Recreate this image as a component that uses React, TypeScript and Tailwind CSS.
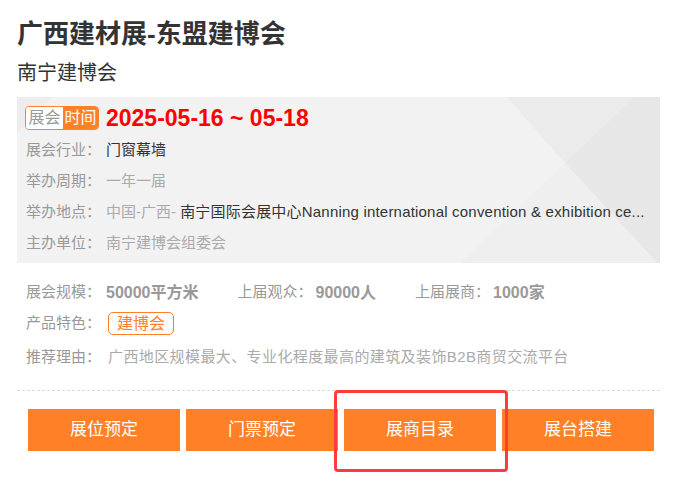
import React from "react";

const font = { fontFamily: '"Liberation Sans", Arial, "Noto Sans CJK SC", sans-serif' };

function Row({ label, children }: { label: string; children: React.ReactNode }) {
  return (
    <div className="flex h-[31px] items-center text-[15px]">
      <span className="w-[80px] shrink-0 text-[#999]">{label}</span>
      <div className="min-w-0 flex-1 whitespace-nowrap">{children}</div>
    </div>
  );
}

export default function App() {
  return (
    <div className="w-[676px] h-[482px] bg-white overflow-hidden" style={font}>
      <div className="pl-[17px] pr-[16px] pt-[16px]">
        <h1 className="text-[26px] leading-[36px] font-bold text-[#333]">广西建材展-东盟建博会</h1>
        <div className="mt-[7px] text-[20px] leading-[28px] text-[#333]">南宁建博会</div>

        <div className="relative mt-[10px] bg-[#f2f2f2] pl-[8px] pr-[10px] pt-[8px] pb-[4px] overflow-hidden">
          <svg className="absolute inset-0 h-full w-full" viewBox="0 0 643 166" preserveAspectRatio="none">
            <polygon points="0,0 36,0 0,36" fill="#ebebeb" opacity="0.7" />
            <polygon points="490,0 617,0 548,66" fill="#ebebeb" />
            <polygon points="548,66 617,0 643,0 643,166 640,166" fill="#e7e7e7" />
            <polygon points="443,166 548,66 640,166" fill="#efefef" />
          </svg>
          <div className="relative">
            <div className="flex h-[26px] items-center">
              <div className="flex h-[24px] w-[74px] overflow-hidden rounded-[4px] border border-[#ff8026] text-[16px] leading-[22px]">
                <span className="flex w-[37px] items-center justify-center bg-white text-[#999]">展会</span>
                <span className="flex flex-1 items-center justify-center bg-[#ff8026] text-white">时间</span>
              </div>
              <span className="ml-[7px] text-[23px] font-bold leading-[26px] text-[#ff0000]">2025-05-16 ~ 05-18</span>
            </div>
            <div className="mt-[4px] pl-[1px]">
              <Row label="展会行业：">
                <span className="text-[#333]">门窗幕墙</span>
              </Row>
              <Row label="举办周期：">
                <span className="text-[#aaa]">一年一届</span>
              </Row>
              <Row label="举办地点：">
                <span className="text-[#aaa]">中国-广西- </span>
                <span className="text-[#333] tracking-[0.2px]">南宁国际会展中心Nanning international convention &amp; exhibition ce...</span>
              </Row>
              <Row label="主办单位：">
                <span className="text-[#aaa]">南宁建博会组委会</span>
              </Row>
            </div>
          </div>
        </div>

        <div className="pl-[9px] mt-[14px]">
          <div className="flex h-[31px] items-center text-[15px]">
            <span className="w-[80px] shrink-0 text-[#999]">展会规模：</span>
            <span className="mr-[39px] text-[16px] font-bold text-[#999]">50000平方米</span>
            <span className="mr-[3px] text-[#999]">上届观众：</span>
            <span className="mr-[39px] text-[16px] font-bold text-[#999]">90000人</span>
            <span className="mr-[3px] text-[#999]">上届展商：</span>
            <span className="text-[16px] font-bold text-[#999]">1000家</span>
          </div>
          <div className="flex h-[31px] items-center text-[15px]">
            <span className="w-[80px] shrink-0 text-[#999]">产品特色：</span>
            <span className="ml-[2px] flex h-[23px] w-[66px] items-center justify-center rounded-[5px] border border-[#ff8026] text-[16px] text-[#ff8026]">建博会</span>
          </div>
          <div className="mt-[3px] flex h-[31px] items-center text-[15px]">
            <span className="w-[80px] shrink-0 text-[#999]">推荐理由：</span>
            <span className="ml-[2px] tracking-[0.4px] text-[#aaa]">广西地区规模最大、专业化程度最高的建筑及装饰B2B商贸交流平台</span>
          </div>
        </div>

        <div className="mt-[17px] border-t border-dashed border-[#dcdcdc]" />

        <div className="relative mt-[18px] flex gap-[6px] pl-[11px]">
          {["展位预定", "门票预定", "展商目录", "展台搭建"].map((t) => (
            <div key={t} className="flex h-[42px] w-[152px] items-center justify-center bg-[#ff8026] text-[17px] text-white">
              {t}
            </div>
          ))}
          <div className="pointer-events-none absolute left-[317px] top-[-19px] h-[82px] w-[174px] rounded-[4px] border-[3px] border-[#ff3b3b]" />
        </div>
      </div>
    </div>
  );
}
